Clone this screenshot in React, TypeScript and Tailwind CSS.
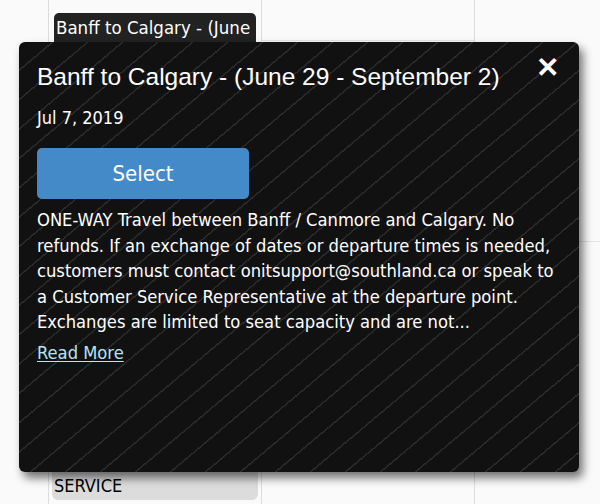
import React from "react";

const tahoma = { fontFamily: '"DejaVu Sans Condensed", "DejaVu Sans", sans-serif' };
const arial = { fontFamily: '"Liberation Sans", Arial, sans-serif' };

const App = () => {
  return (
    <div className="relative w-[600px] h-[504px] overflow-hidden bg-[#fafafa]" style={tahoma}>
      {/* calendar grid behind the popup */}
      <div className="flex h-full">
        <div className="w-[48px] shrink-0" />
        <div className="w-[213px] shrink-0 border-l border-[#dddddd]">
          <div className="h-[13px]" />
          <div className="mx-[5px] h-[29px] rounded-t-[5px] bg-[#222222] px-[2px] text-[18.5px] leading-[30px] text-white overflow-hidden whitespace-nowrap">
            Banff to Calgary - (June
          </div>
          <div className="h-[430px]" />
          <div className="mx-[3px] h-[28px] rounded-b-[6px] bg-[#dcdcdc] px-[2px] text-[18px] leading-[28px] text-black">
            SERVICE
          </div>
        </div>
        <div className="w-[213px] shrink-0 border-l border-[#dddddd]">
          <div className="border-b border-[#e4e4e4] h-[41px]" />
        </div>
        <div className="flex-1 border-l border-[#dddddd]">
          <div className="h-[242px] border-b border-[#e4e4e4]" />
        </div>
      </div>

      {/* event popup */}
      <div className="absolute left-[19px] top-[42px] w-[560px] h-[430px] rounded-[6px] bg-[#111111] bg-[repeating-linear-gradient(140deg,transparent_0px,transparent_21px,#2a2a2a_21px,#2a2a2a_22.5px)] shadow-[4px_6px_10px_rgba(0,0,0,0.55)] px-[18px] pt-[20px] text-white">
        <button className="absolute right-[20px] top-[12px] text-[28px] font-bold leading-none text-white" style={arial}>
          ✕
        </button>
        <h2 className="text-[24.5px] leading-[30px] text-white whitespace-nowrap" style={arial}>
          Banff to Calgary - (June 29 - September 2)
        </h2>
        <div className="mt-[14px] text-[18px] leading-[24px]">Jul 7, 2019</div>
        <button className="mt-[18px] w-[212px] h-[51px] rounded-[5px] bg-[#4489c8] text-[22px] text-white">
          Select
        </button>
        <p className="mt-[8px] text-[18.2px] leading-[25.5px] pr-[6px]">
          ONE-WAY Travel between Banff / Canmore and Calgary. No refunds. If an exchange of dates or departure times is needed, customers must contact onitsupport@southland.ca or speak to a Customer Service Representative at the departure point. Exchanges are limited to seat capacity and are not...
        </p>
        <a href="#" className="block mt-[5px] w-fit text-[18.2px] leading-[25px] text-[#b5e4f6] underline underline-offset-2">
          Read More
        </a>
      </div>
    </div>
  );
};

export default App;
